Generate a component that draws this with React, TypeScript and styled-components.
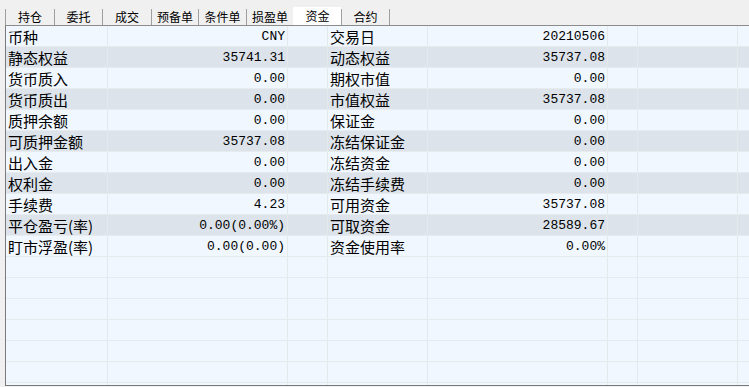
import React from "react";
import styled, { createGlobalStyle } from "styled-components";

const Global = createGlobalStyle`
  html, body { margin: 0; padding: 0; background: #f0f0f0; overflow: hidden; }
  body { width: 749px; height: 387px; }
`;

const Page = styled.div`
  padding: 8px 0 0 5px;
  height: 387px;
  box-sizing: border-box;
  display: flex;
  flex-direction: column;
`;

const TabBar = styled.div`
  display: flex;
  height: 17px;
  align-items: stretch;
`;

const Tab = styled.div<{ $w: number; $active?: boolean }>`
  width: ${(p) => p.$w}px;
  box-sizing: border-box;
  border-left: 1px solid ${(p) => (p.$active ? "#ffffff" : "#a0a0a0")};
  background: ${(p) => (p.$active ? "#ffffff" : "transparent")};
  margin-top: ${(p) => (p.$active ? "-1px" : "1px")};
  display: flex;
  align-items: center;
  justify-content: center;
  font-family: "Noto Sans CJK SC", sans-serif;
  font-size: 12px;
  line-height: 1;
  color: #000;
  &:last-child { border-right: 1px solid #a0a0a0; }
`;

const Grid = styled.div`
  flex: 1;
  margin-bottom: 1px;
  border-left: 1px solid #7a7a7a;
  border-top: 1px solid #8c8c8c;
  border-bottom: 1px solid #7a7a7a;
  overflow: hidden;
  position: relative;
`;

const Row = styled.div<{ $alt: boolean }>`
  display: flex;
  height: 21px;
  box-sizing: border-box;
  border-bottom: 1px solid #e8ebee;
  background: ${(p) => (p.$alt ? "#dce3ea" : "#f0f7ff")};
  white-space: nowrap;
`;

const Cell = styled.div<{ $w: number; $kind?: "label" | "value" }>`
  width: ${(p) => p.$w}px;
  flex: none;
  box-sizing: border-box;
  border-right: 1px solid #e6e9ec;
  display: flex;
  align-items: center;
  justify-content: ${(p) => (p.$kind === "value" ? "flex-end" : "flex-start")};
  padding: ${(p) => (p.$kind === "value" ? "0 2px 0 0" : "0 0 0 2px")};
  font-family: ${(p) =>
    p.$kind === "value"
      ? '"Liberation Mono", "Noto Sans CJK SC", monospace'
      : '"Noto Sans CJK SC", sans-serif'};
  font-size: ${(p) => (p.$kind === "value" ? "13px" : "15px")};
  line-height: 1;
  color: #000;
  &:last-child { flex: 1; border-right: none; }
`;

const tabs: [string, number][] = [
  ["持仓", 49],
  ["委托", 48],
  ["成交", 49],
  ["预备单", 47],
  ["条件单", 48],
  ["损盈单", 47],
  ["资金", 48],
  ["合约", 49],
];

const data: [string, string, string, string][] = [
  ["币种", "CNY", "交易日", "20210506"],
  ["静态权益", "35741.31", "动态权益", "35737.08"],
  ["货币质入", "0.00", "期权市值", "0.00"],
  ["货币质出", "0.00", "市值权益", "35737.08"],
  ["质押余额", "0.00", "保证金", "0.00"],
  ["可质押金额", "35737.08", "冻结保证金", "0.00"],
  ["出入金", "0.00", "冻结资金", "0.00"],
  ["权利金", "0.00", "冻结手续费", "0.00"],
  ["手续费", "4.23", "可用资金", "35737.08"],
  ["平仓盈亏(率)", "0.00(0.00%)", "可取资金", "28589.67"],
  ["盯市浮盈(率)", "0.00(0.00)", "资金使用率", "0.00%"],
];

const TOTAL_ROWS = 18;

export default function App() {
  const rows = Array.from({ length: TOTAL_ROWS }, (_, i) => data[i] ?? ["", "", "", ""]);
  return (
    <>
      <Global />
      <Page>
        <TabBar>
          {tabs.map(([t, w]) => (
            <Tab key={t} $w={w} $active={t === "资金"}>
              {t}
            </Tab>
          ))}
        </TabBar>
        <Grid>
          {rows.map((r, i) => (
            <Row key={i} $alt={i < data.length && i % 2 === 1}>
              <Cell $w={102} $kind="label">{r[0]}</Cell>
              <Cell $w={180} $kind="value">{r[1]}</Cell>
              <Cell $w={40} />
              <Cell $w={100} $kind="label">{r[2]}</Cell>
              <Cell $w={180} $kind="value">{r[3]}</Cell>
              <Cell $w={30} />
              <Cell $w={100} />
              <Cell $w={20} />
            </Row>
          ))}
        </Grid>
      </Page>
    </>
  );
}
